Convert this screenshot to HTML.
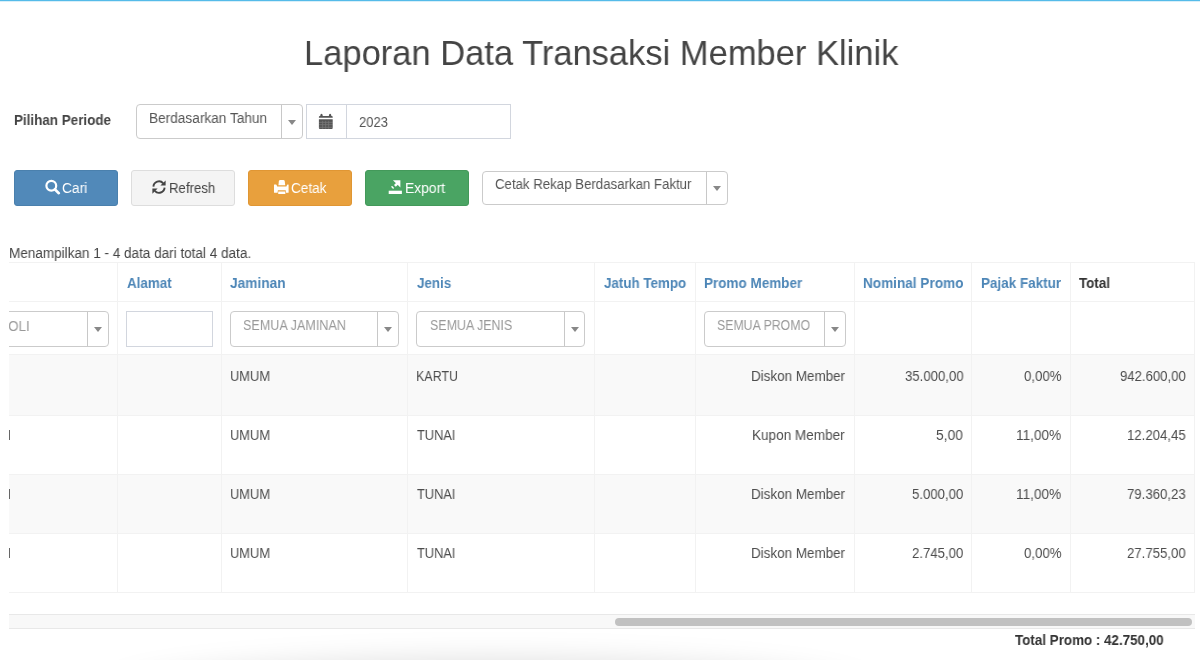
<!DOCTYPE html>
<html><head><meta charset="utf-8">
<style>
html,body{margin:0;padding:0;background:#fff;}
body{width:1200px;height:660px;position:relative;overflow:hidden;font-family:"Liberation Sans",sans-serif;}
.a{position:absolute;box-sizing:border-box;}
.t{position:absolute;white-space:nowrap;line-height:1;will-change:transform;font-family:"Liberation Sans",sans-serif;}
.sel{position:absolute;box-sizing:border-box;border:1px solid #cbcbcb;border-radius:4px;background:#fff;}
.inp{position:absolute;box-sizing:border-box;border:1px solid #d2d6de;background:#fff;}
.vl{position:absolute;width:1px;background:#c8c8c8;}
.arr{position:absolute;width:0;height:0;border-left:4px solid transparent;border-right:4px solid transparent;border-top:5px solid #888;}
.btn{position:absolute;box-sizing:border-box;border-radius:3px;}
.cl{position:absolute;width:1px;background:#f2f2f2;}
.hl{position:absolute;height:1px;background:#f2f2f2;left:9px;width:1186px;}
</style></head><body>
<!-- top line -->
<div class="a" style="left:0;top:0;width:1200px;height:1px;background:#55bbe9"></div>
<div class="a" style="left:0;top:1px;width:1200px;height:1px;background:#d8eff9"></div>

<!-- periode select -->
<div class="sel" style="left:136px;top:104px;width:167px;height:35px;"></div>
<div class="vl" style="left:281px;top:105px;height:33px;"></div>
<div class="arr" style="left:288px;top:120px;"></div>
<!-- date group -->
<div class="inp" style="left:306px;top:104px;width:205px;height:35px;"></div>
<div class="a" style="left:346px;top:105px;width:1px;height:33px;background:#d2d6de"></div>
<svg class="a" style="left:318px;top:113px" width="16" height="17" viewBox="0 0 16 17">
  <g fill="#555">
    <path d="M0.9 4.7 L0.9 3.8 Q0.9 2.9 2 2.9 L2.2 2.9 Q2.4 0.8 3.5 0.8 Q4.6 0.8 4.8 2.9 L10.8 2.9 Q11 0.8 12.1 0.8 Q13.2 0.8 13.4 2.9 L13.6 2.9 Q14.7 2.9 14.7 3.8 L14.7 4.7 Z"/>
    <path d="M0.9 6.2h13.8v8.7a1 1 0 0 1-1 1H1.9a1 1 0 0 1-1-1z"/>
  </g>
  <g fill="#fff" opacity="0.22">
    <rect x="0.9" y="8.9" width="13.8" height="0.7"/>
    <rect x="0.9" y="11.4" width="13.8" height="0.7"/>
    <rect x="0.9" y="13.9" width="13.8" height="0.7"/>
    <rect x="4.4" y="7.8" width="0.7" height="8"/>
    <rect x="7.4" y="7.8" width="0.7" height="8"/>
    <rect x="10.4" y="7.8" width="0.7" height="8"/>
  </g>
</svg>

<!-- buttons -->
<div class="btn" style="left:14px;top:170px;width:104px;height:36px;background:#5189b9;border:1px solid #4a80ad"></div>
<svg class="a" style="left:45px;top:179px" width="16" height="16" viewBox="0 0 16 16">
  <circle cx="6.3" cy="6.8" r="4.9" fill="none" stroke="#fff" stroke-width="2.2"/>
  <path d="M9.8 10.3l4 3.9" stroke="#fff" stroke-width="2.6" stroke-linecap="round"/>
</svg>
<div class="btn" style="left:131px;top:170px;width:104px;height:36px;background:#f4f4f4;border:1px solid #ddd"></div>
<svg class="a" style="left:151px;top:179px" width="16" height="16" viewBox="0 0 16 16">
  <path d="M2.4 7.6A5.6 5.6 0 0 1 12.2 4.3" fill="none" stroke="#444" stroke-width="1.9"/>
  <path d="M14.6 1.4v5.2H9.4z" fill="#444"/>
  <path d="M13.6 8.6A5.6 5.6 0 0 1 3.8 11.9" fill="none" stroke="#444" stroke-width="1.9"/>
  <path d="M1.4 14.8V9.6H6.6z" fill="#444"/>
</svg>
<div class="btn" style="left:248px;top:170px;width:104px;height:36px;background:#e8a03d;border:1px solid #e09633"></div>
<svg class="a" style="left:273px;top:179px" width="17" height="17" viewBox="0 0 17 17">
  <g fill="#fff">
    <path d="M5.4 6.2 L5.9 2 Q6.1 0.9 7.2 0.9 L10.4 0.9 Q11.5 0.9 11.7 2 L12.2 6.2 Z"/>
    <path d="M1 5.7 Q1 5.4 1.4 5.4 L3 5.4 Q3.4 5.4 3.6 5.9 L4.2 7.6 L13.4 7.6 L14 5.9 Q14.2 5.4 14.6 5.4 L15.2 5.4 Q15.6 5.4 15.6 5.7 L15.6 13.4 Q15.6 13.8 15.2 13.8 L13 13.8 L12.7 11.3 L4.9 11.3 L4.6 13.8 L1.4 13.8 Q1 13.8 1 13.4 Z"/>
    <path d="M5.3 12.6 L12.3 12.6 L12.4 14.6 Q12.4 15.1 11.9 15.1 L5.7 15.1 Q5.2 15.1 5.2 14.6 Z"/>
  </g>
</svg>
<div class="btn" style="left:365px;top:170px;width:104px;height:36px;background:#4aa463;border:1px solid #43995a"></div>
<svg class="a" style="left:388px;top:179px" width="16" height="16" viewBox="0 0 16 16">
  <path d="M4.9 1.2H12.4V8.4Z" fill="#fff"/>
  <path d="M10.2 3.6L6.9 6.9" stroke="#fff" stroke-width="2.6"/>
  <path d="M4 7.8L5.2 9" stroke="#fff" stroke-width="1.5" stroke-linecap="round"/>
  <path d="M0.7 11.7H13.9V15H0.7z" fill="#fff"/>
</svg>
<!-- rekap select -->
<div class="sel" style="left:482px;top:171px;width:246px;height:34px;"></div>
<div class="vl" style="left:706px;top:172px;height:32px;"></div>
<div class="arr" style="left:713px;top:186px;"></div>

<!-- table -->
<div class="a" style="left:9px;top:355px;width:1186px;height:60px;background:#f9f9f9"></div>
<div class="a" style="left:9px;top:474px;width:1186px;height:59px;background:#f9f9f9"></div>
<div class="hl" style="top:262px"></div>
<div class="hl" style="top:301px"></div>
<div class="hl" style="top:354px"></div>
<div class="hl" style="top:415px"></div>
<div class="hl" style="top:474px"></div>
<div class="hl" style="top:533px"></div>
<div class="hl" style="top:592px"></div>
<div class="cl" style="left:117px;top:263px;height:329px"></div>
<div class="cl" style="left:221px;top:263px;height:329px"></div>
<div class="cl" style="left:407px;top:263px;height:329px"></div>
<div class="cl" style="left:594px;top:263px;height:329px"></div>
<div class="cl" style="left:695px;top:263px;height:329px"></div>
<div class="cl" style="left:854px;top:263px;height:329px"></div>
<div class="cl" style="left:971px;top:263px;height:329px"></div>
<div class="cl" style="left:1070px;top:263px;height:329px"></div>
<div class="cl" style="left:1194px;top:263px;height:329px"></div>

<!-- filter row -->
<div class="a" style="left:9px;top:311px;width:100px;height:36px;overflow:hidden">
  <div class="sel" style="left:-80px;top:0;width:180px;height:36px"></div>
  <div class="t" style="left:-60.5px;top:7.5px;font-size:14px;color:#999;transform:scaleX(0.95);transform-origin:0 0">SEMUA POLI</div>
</div>
<div class="vl" style="left:87px;top:312px;height:34px"></div>
<div class="arr" style="left:94px;top:327px"></div>
<div class="inp" style="left:126px;top:311px;width:87px;height:36px"></div>
<div class="sel" style="left:230px;top:311px;width:169px;height:36px"></div>
<div class="vl" style="left:377px;top:312px;height:34px"></div>
<div class="arr" style="left:384px;top:327px"></div>
<div class="sel" style="left:416px;top:311px;width:169px;height:36px"></div>
<div class="vl" style="left:564px;top:312px;height:34px"></div>
<div class="arr" style="left:571px;top:327px"></div>
<div class="sel" style="left:704px;top:311px;width:142px;height:36px"></div>
<div class="vl" style="left:824px;top:312px;height:34px"></div>
<div class="arr" style="left:831px;top:327px"></div>

<!-- clipped I in rows 2-4 -->
<div class="a" style="left:9px;top:430px;width:1.4px;height:10px;background:#666"></div>
<div class="a" style="left:9px;top:489px;width:1.4px;height:10px;background:#666"></div>
<div class="a" style="left:9px;top:548px;width:1.4px;height:10px;background:#666"></div>

<!-- scrollbar -->
<div class="a" style="left:9px;top:614px;width:1186px;height:15px;background:#f8f8f8;border-top:1px solid #e8e8e8;border-bottom:1px solid #e8e8e8"></div>
<div class="a" style="left:615px;top:618px;width:577px;height:8px;background:#c1c1c1;border-radius:4px"></div>

<!-- bottom shadow -->
<div class="a" style="left:0;top:629px;width:1200px;height:31px;overflow:hidden">
  <div class="a" style="left:115px;top:30px;width:750px;height:70px;border-radius:50%;background:rgba(0,0,0,0.12);filter:blur(14px)"></div>
</div>
<div class="t" style="left:304.34px;transform-origin:0 0;top:35.35px;font-size:35px;font-weight:400;color:#444;transform:scaleX(0.9857);">Laporan Data Transaksi Member Klinik</div>
<div class="t" style="left:14.29px;transform-origin:0 0;top:112.70px;font-size:14px;font-weight:700;color:#444;transform:scaleX(0.9600);">Pilihan Periode</div>
<div class="t" style="left:148.72px;transform-origin:0 0;top:110.75px;font-size:14px;font-weight:400;color:#555;transform:scaleX(0.9756);">Berdasarkan Tahun</div>
<div class="t" style="left:359.07px;transform-origin:0 0;top:115.25px;font-size:14px;font-weight:400;color:#555;transform:scaleX(0.9333);">2023</div>
<div class="t" style="left:62.42px;transform-origin:0 0;top:181.30px;font-size:14px;font-weight:400;color:#fff;transform:scaleX(0.9833);">Cari</div>
<div class="t" style="left:168.96px;transform-origin:0 0;top:181.00px;font-size:14px;font-weight:400;color:#444;transform:scaleX(0.9426);">Refresh</div>
<div class="t" style="left:290.63px;transform-origin:0 0;top:181.25px;font-size:14px;font-weight:400;color:#fff;transform:scaleX(0.9714);">Cetak</div>
<div class="t" style="left:405.41px;transform-origin:0 0;top:181.25px;font-size:14px;font-weight:400;color:#fff;transform:scaleX(0.9897);">Export</div>
<div class="t" style="left:495.05px;transform-origin:0 0;top:177.40px;font-size:14px;font-weight:400;color:#555;transform:scaleX(0.9454);">Cetak Rekap Berdasarkan Faktur</div>
<div class="t" style="left:8.78px;transform-origin:0 0;top:245.68px;font-size:14px;font-weight:400;color:#444;transform:scaleX(0.9661);">Menampilkan 1 - 4 data dari total 4 data.</div>
<div class="t" style="left:126.80px;transform-origin:0 0;top:275.60px;font-size:14px;font-weight:700;color:#4d86b7;transform:scaleX(0.9574);">Alamat</div>
<div class="t" style="left:230.40px;transform-origin:0 0;top:275.60px;font-size:14px;font-weight:700;color:#4d86b7;transform:scaleX(0.9786);">Jaminan</div>
<div class="t" style="left:416.80px;transform-origin:0 0;top:275.60px;font-size:14px;font-weight:700;color:#4d86b7;transform:scaleX(0.9571);">Jenis</div>
<div class="t" style="left:603.90px;transform-origin:0 0;top:275.60px;font-size:14px;font-weight:700;color:#4d86b7;transform:scaleX(0.9547);">Jatuh Tempo</div>
<div class="t" style="left:703.74px;transform-origin:0 0;top:275.60px;font-size:14px;font-weight:700;color:#4d86b7;transform:scaleX(0.9634);">Promo Member</div>
<div class="t" style="left:863.03px;transform-origin:0 0;top:275.60px;font-size:14px;font-weight:700;color:#4d86b7;transform:scaleX(0.9706);">Nominal Promo</div>
<div class="t" style="left:980.64px;transform-origin:0 0;top:275.60px;font-size:14px;font-weight:700;color:#4d86b7;transform:scaleX(0.9622);">Pajak Faktur</div>
<div class="t" style="left:1079.40px;transform-origin:0 0;top:275.60px;font-size:14px;font-weight:700;color:#333;transform:scaleX(0.9562);">Total</div>
<div class="t" style="left:243.35px;transform-origin:0 0;top:318.25px;font-size:14px;font-weight:400;color:#999;transform:scaleX(0.8996);">SEMUA JAMINAN</div>
<div class="t" style="left:429.51px;transform-origin:0 0;top:318.25px;font-size:14px;font-weight:400;color:#999;transform:scaleX(0.8879);">SEMUA JENIS</div>
<div class="t" style="left:716.87px;transform-origin:0 0;top:318.25px;font-size:14px;font-weight:400;color:#999;transform:scaleX(0.8798);">SEMUA PROMO</div>
<div class="t" style="left:229.88px;transform-origin:0 0;top:369.25px;font-size:14px;font-weight:400;color:#4d4d4d;transform:scaleX(0.9190);">UMUM</div>
<div class="t" style="left:416.31px;transform-origin:0 0;top:369.25px;font-size:14px;font-weight:400;color:#4d4d4d;transform:scaleX(0.8911);">KARTU</div>
<div class="t" style="left:751.34px;transform-origin:0 0;top:369.25px;font-size:14px;font-weight:400;color:#4d4d4d;transform:scaleX(0.9598);">Diskon Member</div>
<div class="t" style="left:904.66px;transform-origin:0 0;top:369.25px;font-size:14px;font-weight:400;color:#4d4d4d;transform:scaleX(0.9410);">35.000,00</div>
<div class="t" style="left:1023.60px;transform-origin:0 0;top:369.25px;font-size:14px;font-weight:400;color:#4d4d4d;transform:scaleX(0.9436);">0,00%</div>
<div class="t" style="left:1119.66px;transform-origin:0 0;top:369.25px;font-size:14px;font-weight:400;color:#4d4d4d;transform:scaleX(0.9391);">942.600,00</div>
<div class="t" style="left:229.88px;transform-origin:0 0;top:428.25px;font-size:14px;font-weight:400;color:#4d4d4d;transform:scaleX(0.9190);">UMUM</div>
<div class="t" style="left:417.20px;transform-origin:0 0;top:428.25px;font-size:14px;font-weight:400;color:#4d4d4d;transform:scaleX(0.9146);">TUNAI</div>
<div class="t" style="left:752.43px;transform-origin:0 0;top:428.25px;font-size:14px;font-weight:400;color:#4d4d4d;transform:scaleX(0.9684);">Kupon Member</div>
<div class="t" style="left:936.42px;transform-origin:0 0;top:428.25px;font-size:14px;font-weight:400;color:#4d4d4d;transform:scaleX(0.9846);">5,00</div>
<div class="t" style="left:1015.73px;transform-origin:0 0;top:428.25px;font-size:14px;font-weight:400;color:#4d4d4d;transform:scaleX(0.9711);">11,00%</div>
<div class="t" style="left:1126.96px;transform-origin:0 0;top:428.25px;font-size:14px;font-weight:400;color:#4d4d4d;transform:scaleX(0.9426);">12.204,45</div>
<div class="t" style="left:229.88px;transform-origin:0 0;top:487.25px;font-size:14px;font-weight:400;color:#4d4d4d;transform:scaleX(0.9190);">UMUM</div>
<div class="t" style="left:417.20px;transform-origin:0 0;top:487.25px;font-size:14px;font-weight:400;color:#4d4d4d;transform:scaleX(0.9146);">TUNAI</div>
<div class="t" style="left:751.34px;transform-origin:0 0;top:487.25px;font-size:14px;font-weight:400;color:#4d4d4d;transform:scaleX(0.9598);">Diskon Member</div>
<div class="t" style="left:912.26px;transform-origin:0 0;top:487.25px;font-size:14px;font-weight:400;color:#4d4d4d;transform:scaleX(0.9396);">5.000,00</div>
<div class="t" style="left:1015.73px;transform-origin:0 0;top:487.25px;font-size:14px;font-weight:400;color:#4d4d4d;transform:scaleX(0.9711);">11,00%</div>
<div class="t" style="left:1126.96px;transform-origin:0 0;top:487.25px;font-size:14px;font-weight:400;color:#4d4d4d;transform:scaleX(0.9426);">79.360,23</div>
<div class="t" style="left:229.88px;transform-origin:0 0;top:546.25px;font-size:14px;font-weight:400;color:#4d4d4d;transform:scaleX(0.9190);">UMUM</div>
<div class="t" style="left:417.20px;transform-origin:0 0;top:546.25px;font-size:14px;font-weight:400;color:#4d4d4d;transform:scaleX(0.9146);">TUNAI</div>
<div class="t" style="left:751.34px;transform-origin:0 0;top:546.25px;font-size:14px;font-weight:400;color:#4d4d4d;transform:scaleX(0.9598);">Diskon Member</div>
<div class="t" style="left:912.26px;transform-origin:0 0;top:546.25px;font-size:14px;font-weight:400;color:#4d4d4d;transform:scaleX(0.9396);">2.745,00</div>
<div class="t" style="left:1023.60px;transform-origin:0 0;top:546.25px;font-size:14px;font-weight:400;color:#4d4d4d;transform:scaleX(0.9436);">0,00%</div>
<div class="t" style="left:1126.96px;transform-origin:0 0;top:546.25px;font-size:14px;font-weight:400;color:#4d4d4d;transform:scaleX(0.9426);">27.755,00</div>
<div class="t" style="left:1015.00px;transform-origin:0 0;top:633.15px;font-size:14px;font-weight:700;color:#333;transform:scaleX(0.9568);">Total Promo : 42.750,00</div>
</body></html>
